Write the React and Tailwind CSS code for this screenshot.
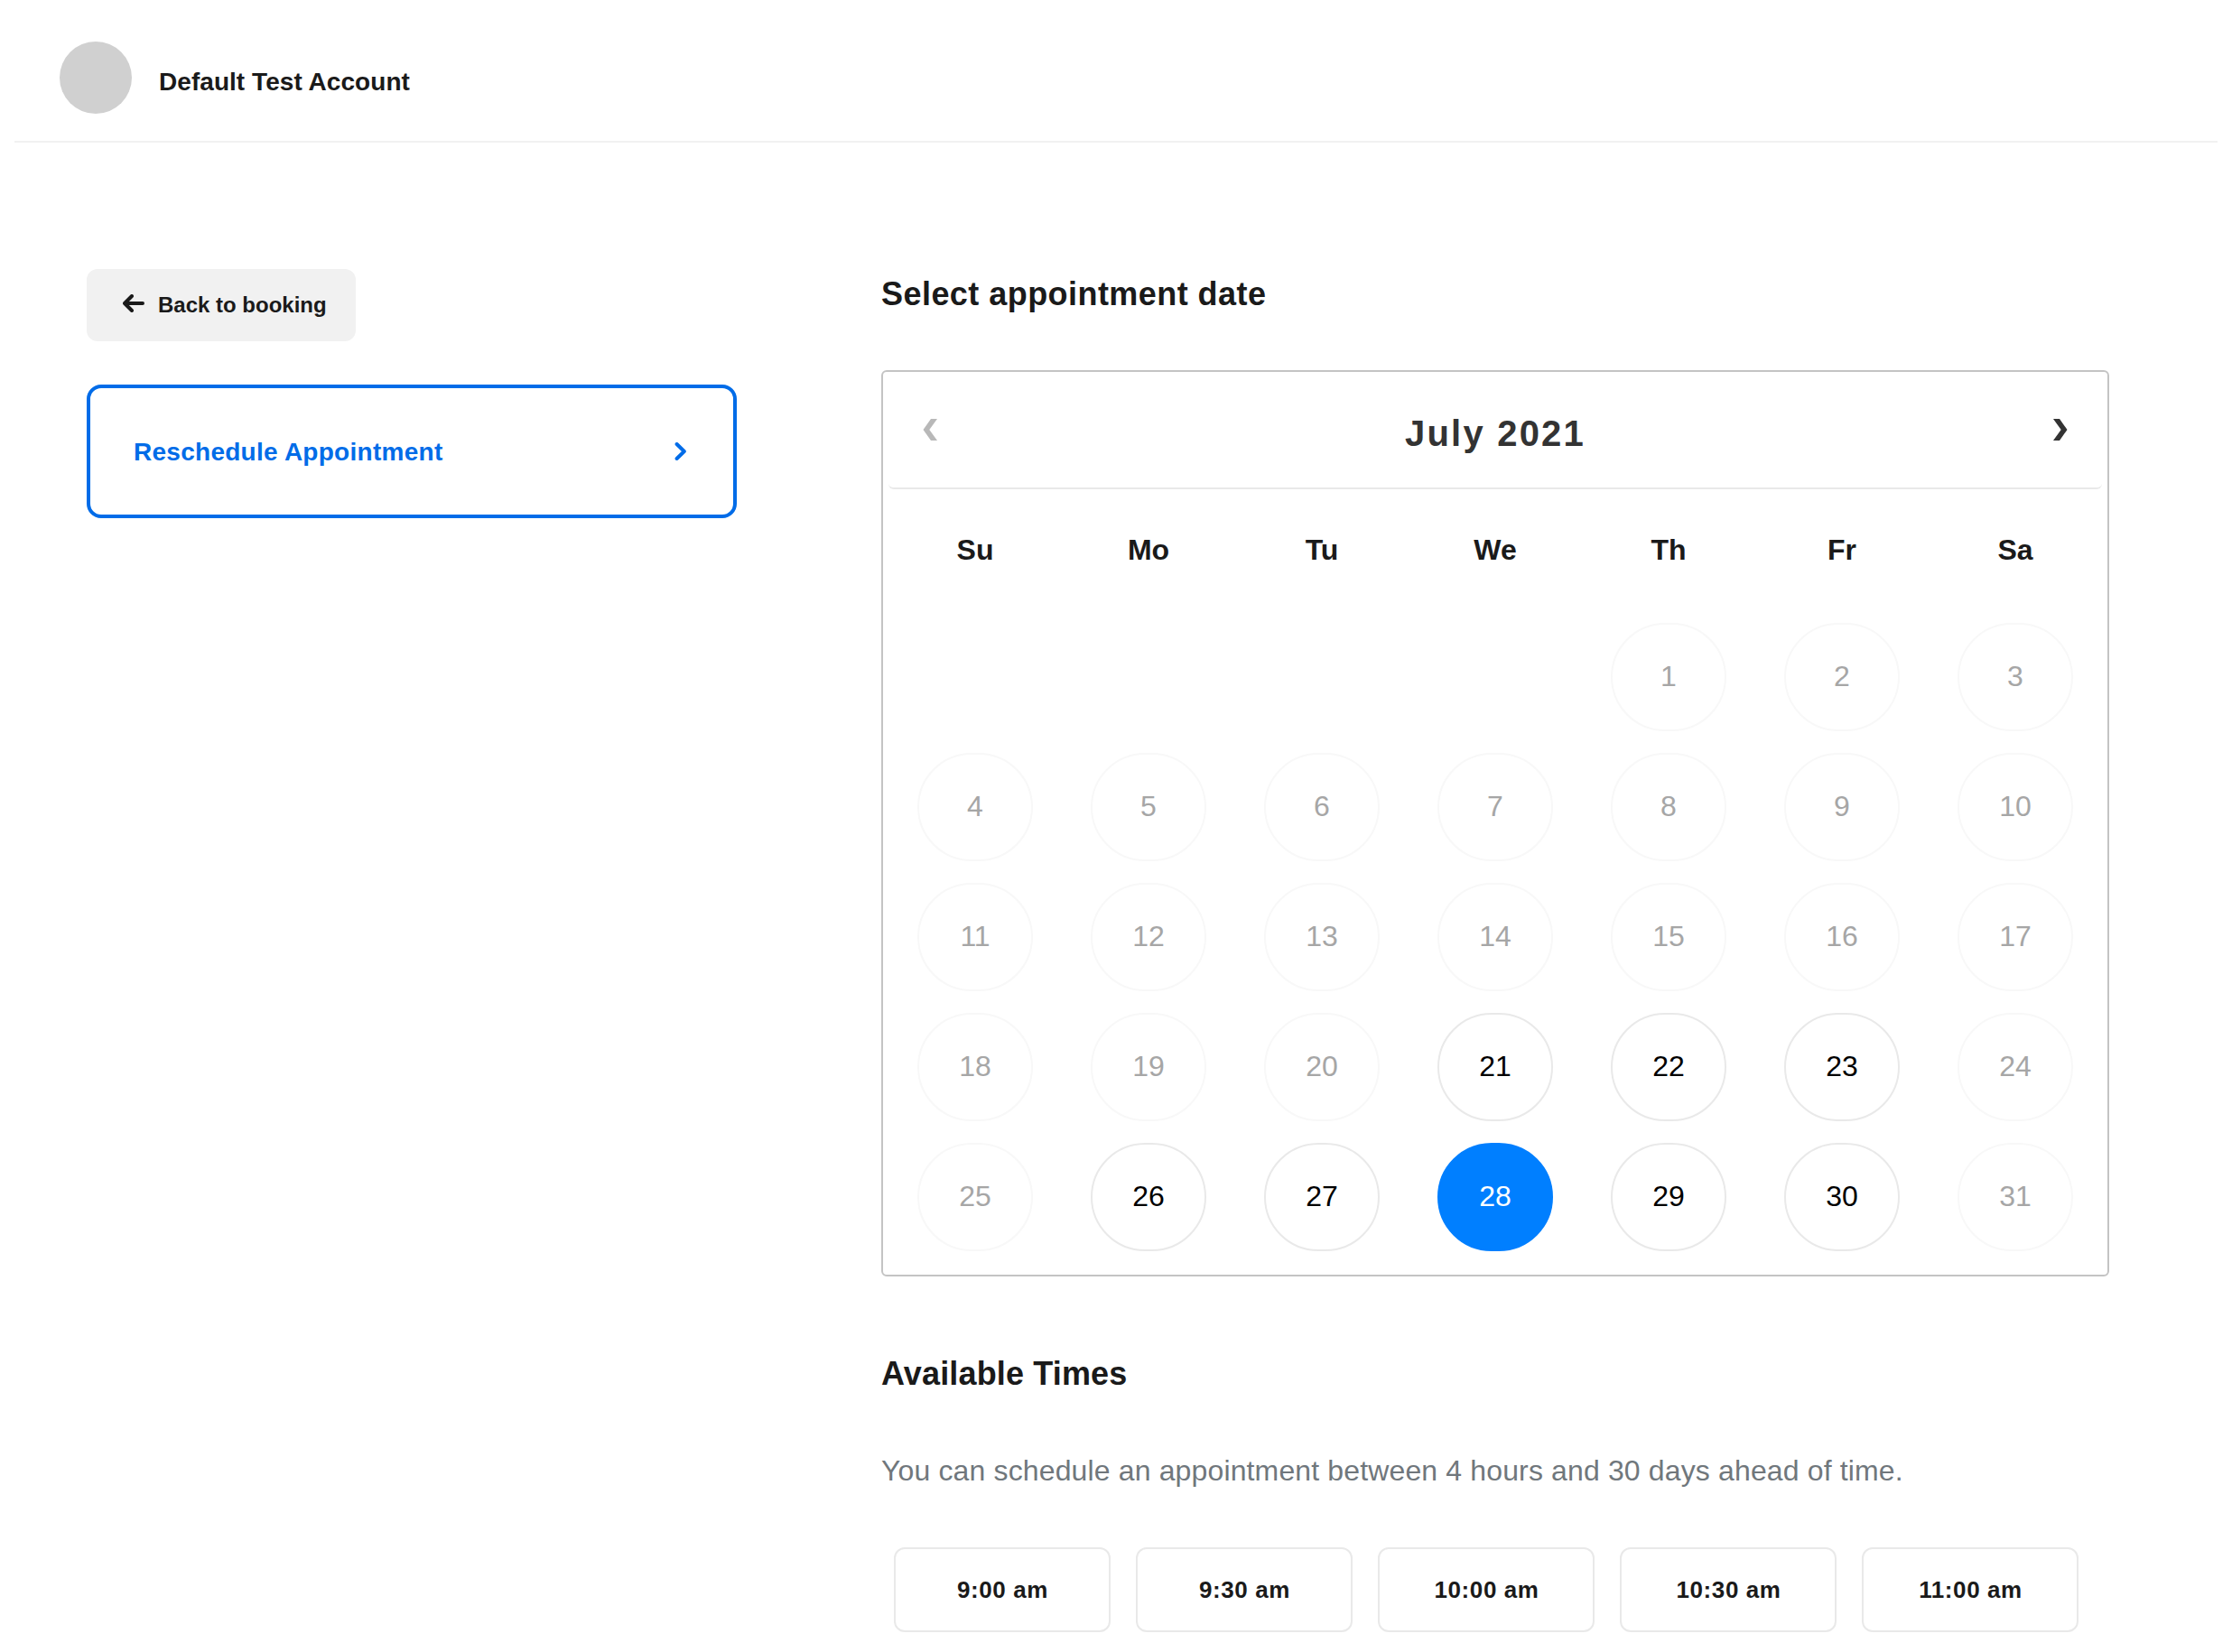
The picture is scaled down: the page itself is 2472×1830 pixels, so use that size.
const WEEKDAYS = ["Su", "Mo", "Tu", "We", "Th", "Fr", "Sa"];
const LEADING_BLANKS = 4;
const AVAILABLE = [21, 22, 23, 26, 27, 29, 30];
const SELECTED = 28;
const TIMES = ["9:00 am", "9:30 am", "10:00 am", "10:30 am", "11:00 am"];

function Day({ day }) {
  let tone = "border-[#f8f8f8] text-[#a6a6a6]";
  if (day === SELECTED) tone = "border-[#007fff] bg-[#007fff] text-white";
  else if (AVAILABLE.includes(day)) tone = "border-[#e9e9e9] text-black";
  return (
    <button
      className={`flex h-[120px] w-32 items-center justify-center rounded-full border-2 pb-[2px] text-[32px] leading-[40px] ${tone}`}
    >
      {day}
    </button>
  );
}

function Calendar() {
  const days = Array.from({ length: 31 }, (_, i) => i + 1);
  return (
    <div className="mt-14 h-[1004px] rounded-[6px] border-2 border-[#c4c4c4] p-[6px]">
      <div className="flex h-[124px] items-center justify-between rounded-[6px] border-b-2 border-[#e9e9e9] px-[38px]">
        <button className="-mt-[6px]">
          <svg width="16" height="24" viewBox="0 0 16 24" fill="#b8b8b8">
            <path d="M9 0H16L7.3 12L16 24H9L0.5 12Z" />
          </svg>
        </button>
        <div className="pt-[2px] text-[40px] font-bold leading-[48px] tracking-[2.2px] text-[#333333]">July 2021</div>
        <button className="-mt-[6px]">
          <svg width="16" height="24" viewBox="0 0 16 24" fill="#333333">
            <path d="M7 0H0L8.7 12L0 24H7L15.5 12Z" />
          </svg>
        </button>
      </div>
      <div className="mb-[14px] grid grid-cols-7 text-center text-[32px] font-bold leading-[134px]">
        {WEEKDAYS.map((d) => (
          <div key={d}>{d}</div>
        ))}
      </div>
      <div className="grid grid-cols-7 justify-items-center gap-y-6">
        {Array.from({ length: LEADING_BLANKS }, (_, i) => (
          <span key={`blank-${i}`} />
        ))}
        {days.map((d) => (
          <Day key={d} day={d} />
        ))}
      </div>
    </div>
  );
}

export default function App() {
  return (
    <div className="h-[1830px] overflow-hidden bg-white font-['Liberation_Sans',Arial,sans-serif] text-[#1a1a1a]">
      <header className="mx-4 flex h-[158px] border-b-2 border-[#f1f1f1] pl-[50px] pt-[46px]">
        <div className="size-20 rounded-full bg-[#d0d0d0]" />
        <div className="ml-[30px] mt-[25px] text-[28px] font-bold leading-[40px] tracking-[0.05px]">
          Default Test Account
        </div>
      </header>

      <main className="flex gap-40 pl-24 pt-[140px]">
        <aside className="w-[720px]">
          <button className="flex h-20 w-[298px] items-center rounded-xl bg-[#f1f1f1] pl-10">
            <svg
              className="-mt-1"
              width="24"
              height="20"
              viewBox="0 0 24 20"
              fill="none"
              stroke="currentColor"
              strokeWidth="4"
              strokeLinecap="round"
              strokeLinejoin="round"
            >
              <path d="M10 2L2 10L10 18M2.5 10H22" />
            </svg>
            <span className="ml-[15px] text-2xl font-bold leading-[32px]">Back to booking</span>
          </button>
          <button className="mt-12 flex h-[148px] w-full items-center justify-between rounded-2xl border-4 border-[#006ce8] pl-12 pr-[51px] text-[#006ce8]">
            <span className="pt-[2px] text-[28px] font-bold leading-[40px] tracking-[0.27px]">
              Reschedule Appointment
            </span>
            <svg
              width="14"
              height="20"
              viewBox="0 0 14 20"
              fill="none"
              stroke="currentColor"
              strokeWidth="4"
              strokeLinecap="round"
              strokeLinejoin="round"
            >
              <path d="M2.6 2L10.8 10L2.6 18" />
            </svg>
          </button>
        </aside>

        <section className="w-[1360px]">
          <h2 className="text-4xl/[56px] font-bold tracking-[0.45px]">Select appointment date</h2>
          <Calendar />
          <h2 className="mt-[88px] text-4xl/[40px] font-bold tracking-[0.15px]">Available Times</h2>
          <p className="mt-[67px] text-[32px] leading-[40px] tracking-[0.14px] text-[#70777c]">
            You can schedule an appointment between 4 hours and 30 days ahead of time.
          </p>
          <div className="ml-[14px] mt-[65px] flex gap-7">
            {TIMES.map((t) => (
              <button
                key={t}
                className="h-[94px] w-60 rounded-xl border-2 border-[#e9e9e9] pl-px text-[26px] font-bold leading-[32px] tracking-[0.6px]"
              >
                {t}
              </button>
            ))}
          </div>
        </section>
      </main>
    </div>
  );
}
